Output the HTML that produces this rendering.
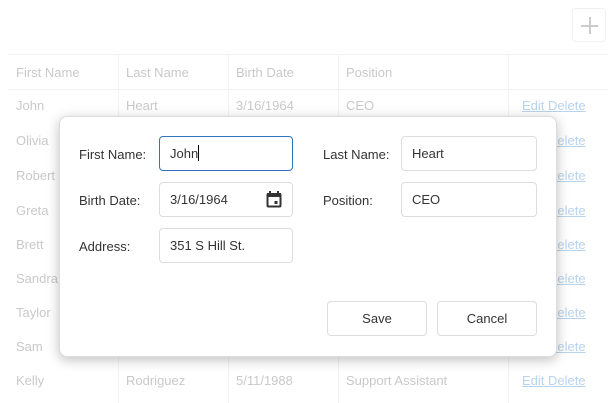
<!DOCTYPE html>
<html><head><style>
body{margin:0;width:613px;height:403px;overflow:hidden;background:#fff;font-family:"Liberation Sans",sans-serif;font-size:13px;position:relative}
.t{position:absolute;color:#c9c9c9;white-space:nowrap}
.hl{position:absolute;left:8px;width:600px;height:1px;background:#f0f0f0}
.vl{position:absolute;top:55px;width:1px;height:348px;background:#f3f3f3}
.lk{position:absolute;color:#b9d3ec;text-decoration:underline;left:522px}
.plus{position:absolute;left:572px;top:8px;width:34px;height:34px;border:1px solid #f0f0f0;border-radius:4px;box-sizing:border-box}
.dlg{position:absolute;left:59px;top:116px;width:498px;height:241px;background:#fff;border-radius:8px;box-shadow:0 3px 12px rgba(0,0,0,.25);border:1px solid #ddd;box-sizing:border-box}
.lb{position:absolute;color:#333;font-size:13px}
.in{position:absolute;border:1px solid #ddd;border-radius:4px;height:35px;box-sizing:border-box;padding:0 10px;line-height:33px;color:#333;font-size:13px}
.btn{position:absolute;border:1px solid #ddd;border-radius:4px;height:35px;width:100px;box-sizing:border-box;text-align:center;line-height:33px;color:#333}
</style></head><body>
<div class="plus"><div style="position:absolute;left:8px;top:16px;width:17px;height:1.5px;background:#ccc"></div><div style="position:absolute;left:16px;top:8px;width:1.5px;height:17px;background:#ccc"></div></div>
<div class="hl" style="top:54px"></div><div class="hl" style="top:89px"></div>
<div class="vl" style="left:118px"></div><div class="vl" style="left:228px"></div><div class="vl" style="left:338px"></div><div class="vl" style="left:508px"></div>
<div class="t" style="left:16px;top:65px">First Name</div><div class="t" style="left:126px;top:65px">Last Name</div><div class="t" style="left:236px;top:65px">Birth Date</div><div class="t" style="left:346px;top:65px">Position</div>
<div class="t" style="left:16px;top:98px">John</div><div class="t" style="left:126px;top:98px">Heart</div><div class="t" style="left:236px;top:98px">3/16/1964</div><div class="t" style="left:346px;top:98px">CEO</div><div class="lk" style="top:98px">Edit Delete</div>
<div class="t" style="left:16px;top:133px">Olivia</div><div class="lk" style="top:133px">Edit Delete</div>
<div class="t" style="left:16px;top:168px">Robert</div><div class="lk" style="top:168px">Edit Delete</div>
<div class="t" style="left:16px;top:203px">Greta</div><div class="lk" style="top:203px">Edit Delete</div>
<div class="t" style="left:16px;top:237px">Brett</div><div class="lk" style="top:237px">Edit Delete</div>
<div class="t" style="left:16px;top:271px">Sandra</div><div class="lk" style="top:271px">Edit Delete</div>
<div class="t" style="left:16px;top:305px">Taylor</div><div class="lk" style="top:305px">Edit Delete</div>
<div class="t" style="left:16px;top:339px">Sam</div><div class="lk" style="top:339px">Edit Delete</div>
<div class="t" style="left:16px;top:373px">Kelly</div><div class="t" style="left:126px;top:373px">Rodriguez</div><div class="t" style="left:236px;top:373px">5/11/1988</div><div class="t" style="left:346px;top:373px">Support Assistant</div><div class="lk" style="top:373px">Edit Delete</div>
<div class="dlg"></div>
<div class="lb" style="left:79px;top:147px">First Name:</div>
<div class="in" style="left:159px;top:136px;width:134px;border-color:#2f74c0">John<span style="display:inline-block;width:1px;height:16px;background:#000;vertical-align:-3px"></span></div>
<div class="lb" style="left:323px;top:147px">Last Name:</div>
<div class="in" style="left:401px;top:136px;width:136px">Heart</div>
<div class="lb" style="left:79px;top:193px">Birth Date:</div>
<div class="in" style="left:159px;top:182px;width:134px">3/16/1964
<svg style="position:absolute;left:106px;top:8px" width="16" height="17" viewBox="0 0 16 17"><rect x="1.5" y="3" width="13" height="12.5" rx="1" fill="none" stroke="#333" stroke-width="2"/><rect x="1" y="2" width="14" height="4" fill="#333"/><rect x="3" y="0" width="2" height="3" fill="#333"/><rect x="11" y="0" width="2" height="3" fill="#333"/><rect x="8.5" y="10" width="3" height="3" fill="#333"/></svg></div>
<div class="lb" style="left:323px;top:193px">Position:</div>
<div class="in" style="left:401px;top:182px;width:136px">CEO</div>
<div class="lb" style="left:79px;top:239px">Address:</div>
<div class="in" style="left:159px;top:228px;width:134px">351 S Hill St.</div>
<div class="btn" style="left:327px;top:301px">Save</div>
<div class="btn" style="left:437px;top:301px">Cancel</div>
</body></html>
